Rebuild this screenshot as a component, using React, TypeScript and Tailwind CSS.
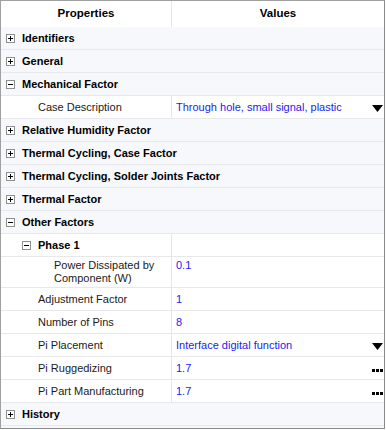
import React from 'react';

type Row =
  | { kind: 'cat'; label: string; open?: boolean }
  | { kind: 'sub'; label: string }
  | { kind: 'prop'; label: string; value: string; control?: 'drop' | 'dots'; tall?: boolean };

const rows: Row[] = [
  { kind: 'cat', label: 'Identifiers' },
  { kind: 'cat', label: 'General' },
  { kind: 'cat', label: 'Mechanical Factor', open: true },
  { kind: 'prop', label: 'Case Description', value: 'Through hole, small signal, plastic', control: 'drop' },
  { kind: 'cat', label: 'Relative Humidity Factor' },
  { kind: 'cat', label: 'Thermal Cycling, Case Factor' },
  { kind: 'cat', label: 'Thermal Cycling, Solder Joints Factor' },
  { kind: 'cat', label: 'Thermal Factor' },
  { kind: 'cat', label: 'Other Factors', open: true },
  { kind: 'sub', label: 'Phase 1' },
  { kind: 'prop', label: 'Power Dissipated by Component (W)', value: '0.1', tall: true },
  { kind: 'prop', label: 'Adjustment Factor', value: '1' },
  { kind: 'prop', label: 'Number of Pins', value: '8' },
  { kind: 'prop', label: 'Pi Placement', value: 'Interface digital function', control: 'drop' },
  { kind: 'prop', label: 'Pi Ruggedizing', value: '1.7', control: 'dots' },
  { kind: 'prop', label: 'Pi Part Manufacturing', value: '1.7', control: 'dots' },
  { kind: 'cat', label: 'History' },
];

// tree expander box (+ / -)
const Toggle = ({ open }: { open?: boolean }) => (
  <span className="relative w-[9px] h-[9px] border border-[#8f8f8f] bg-white shrink-0">
    <span className="absolute left-[1px] top-[3px] w-[5px] h-[1px] bg-black" />
    {!open && <span className="absolute left-[3px] top-[1px] w-[1px] h-[5px] bg-black" />}
  </span>
);

const DropArrow = () => (
  <svg width="11" height="7" viewBox="0 0 11 7" className="mt-[3px]">
    <polygon points="0,0 11,0 5.5,7" fill="#000" />
  </svg>
);

const Dots = () => (
  <span className="flex gap-[1px] mt-[5px]">
    <span className="w-[3px] h-[3px] bg-black" />
    <span className="w-[3px] h-[3px] bg-black" />
    <span className="w-[3px] h-[3px] bg-black" />
  </span>
);

export default function App() {
  return (
    <div
      className="w-[385px] h-[429px] border border-[#a0a0a0] border-r-[#8a8a8a] border-b-[#8a8a8a] bg-[#f7f8fc] overflow-hidden flex flex-col"
      style={{ fontFamily: '"Liberation Sans", Arial, sans-serif' }}
    >
      <div className="flex h-[26px] bg-white shrink-0 font-bold text-[11.5px] text-black">
        <div className="w-[171px] flex items-center justify-center border-r border-[#e6e6e6]">Properties</div>
        <div className="flex-1 flex items-center justify-center">Values</div>
      </div>
      {rows.map((r, i) => {
        if (r.kind === 'cat') {
          return (
            <div key={i} className="flex items-center h-[23px] shrink-0 border-b border-[#e8e8ec] pl-[5px] gap-[7px] bg-[#f7f8fc]">
              <Toggle open={r.open} />
              <span className="font-bold text-[11px] text-black">{r.label}</span>
            </div>
          );
        }
        if (r.kind === 'sub') {
          return (
            <div key={i} className="flex h-[23px] shrink-0 border-b border-[#e8e8ec] bg-white">
              <div className="w-[171px] flex items-center pl-[21px] gap-[7px] border-r border-[#e6e6e6]">
                <Toggle open />
                <span className="font-bold text-[11px] text-black">{r.label}</span>
              </div>
              <div className="flex-1" />
            </div>
          );
        }
        return (
          <div
            key={i}
            className={`flex shrink-0 border-b border-[#e8e8ec] bg-white text-[11px] ${r.tall ? 'h-[31px]' : 'h-[23px]'}`}
          >
            <div
              className={`w-[171px] flex border-r border-[#e6e6e6] text-[#1a1a1a] ${
                r.tall ? 'items-start pt-[2px] leading-[13px] pl-[53px] pr-[4px]' : 'items-center pl-[37px]'
              }`}
            >
              {r.label}
            </div>
            <div className={`flex-1 flex justify-between pl-[4px] pr-[1px] ${r.tall ? 'items-start pt-[2px] leading-[13px]' : 'items-center'}`}>
              <span className="text-[#1c1cf0]">{r.value}</span>
              {r.control === 'drop' && <DropArrow />}
              {r.control === 'dots' && <Dots />}
            </div>
          </div>
        );
      })}
    </div>
  );
}
